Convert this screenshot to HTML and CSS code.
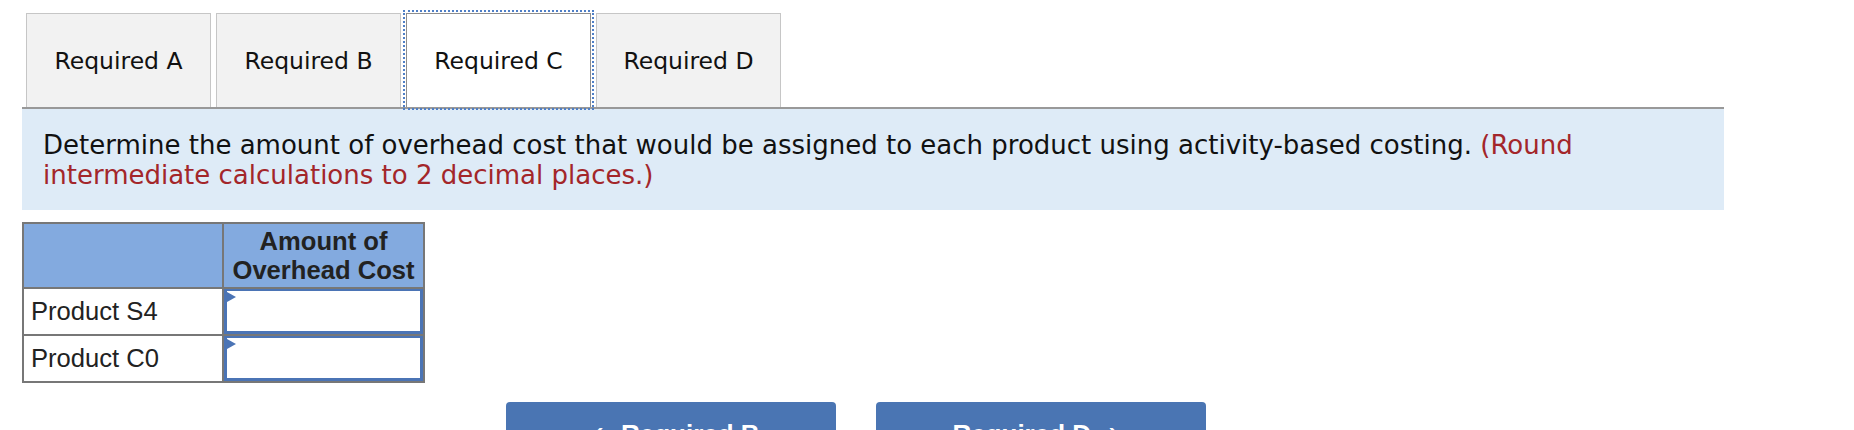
FILE: index.html
```html
<!DOCTYPE html>
<html>
<head>
<meta charset="utf-8">
<link rel="stylesheet" href="styles.css">
</head>
<body>
<div class="page">
  <div class="tabs">
    <div class="tab">Required A</div>
    <div class="tab">Required B</div>
    <div class="tab active">Required C</div>
    <div class="tab">Required D</div>
  </div>
  <div class="instructions">
    Determine the amount of overhead cost that would be assigned to each product using activity-based costing. <span class="note">(Round intermediate calculations to 2 decimal places.)</span>
  </div>
  <table class="grid">
    <tr>
      <th class="blank"></th>
      <th>Amount of<br>Overhead Cost</th>
    </tr>
    <tr>
      <td class="label">Product S4</td>
      <td class="cell"><div class="inputbox"><span class="flag"></span></div></td>
    </tr>
    <tr>
      <td class="label">Product C0</td>
      <td class="cell"><div class="inputbox"><span class="flag"></span></div></td>
    </tr>
  </table>
  <div class="nav">
    <div class="btn"><span class="chev">&lsaquo;</span> Required B</div>
    <div class="btn">Required D <span class="chev">&rsaquo;</span></div>
  </div>
</div>
</body>
</html>
```
FILE: styles.css
```css
html, body {
  margin: 0;
  padding: 0;
  background: #ffffff;
}
body {
  font-family: "DejaVu Sans", Verdana, sans-serif;
  color: #111;
  overflow: hidden;
}
.page {
  padding-left: 22px;
  padding-top: 13px;
}
.tabs {
  display: flex;
  gap: 5px;
  padding-left: 4px;
  position: relative;
  z-index: 1;
}
.tab {
  box-sizing: border-box;
  width: 185px;
  height: 94px;
  border: 1px solid #c6c6c6;
  border-bottom: none;
  background: #f2f2f2;
  display: flex;
  align-items: center;
  justify-content: center;
  font-size: 23.5px;
  color: #111;
}
.tab.active {
  background: #fff;
  border-color: #8e8e8e;
  outline: 2px dotted #4f7fc6;
  outline-offset: 1px;
}
.instructions {
  box-sizing: border-box;
  width: 1702px;
  border-top: 2px solid #999;
  background: #deebf7;
  padding: 21px 21px 20px 21px;
  font-size: 26px;
  line-height: 30px;
  color: #111;
}
.note {
  color: #a3262a;
}
.grid {
  margin-top: 12px;
  border-collapse: collapse;
  font-family: "Liberation Sans", Arial, sans-serif;
  font-size: 25.6px;
  color: #222;
}
.grid th, .grid td {
  border: 2px solid #777;
  padding: 0;
}
.grid th {
  background: #83aadf;
  height: 63px;
  font-weight: bold;
  line-height: 29px;
  text-align: center;
  padding: 0 4px;
}
.grid th.blank {
  width: 198px;
  padding: 0;
}
.grid td {
  height: 45px;
}
.grid td.label {
  padding-left: 7px;
  color: #222;
}
.grid td.cell {
  width: 199px;
}
.inputbox {
  box-sizing: border-box;
  position: relative;
  height: 45px;
  border: 2px solid #4b74b5;
  border-width: 2px 3px 3px 3px;
  background: #fff;
}
.flag {
  position: absolute;
  left: 0;
  top: 1px;
  width: 0;
  height: 0;
  border-top: 5px solid transparent;
  border-bottom: 5px solid transparent;
  border-left: 9px solid #4b74b5;
}
.nav {
  display: flex;
  gap: 40px;
  margin-top: 19px;
  margin-left: 484px;
}
.btn {
  width: 330px;
  height: 60px;
  background: #4a75b3;
  border-radius: 4px;
  color: #fff;
  font-family: "Liberation Sans", Arial, sans-serif;
  font-size: 26px;
  font-weight: bold;
  text-align: center;
  padding-top: 17px;
  box-sizing: border-box;
}
.chev {
  font-weight: normal;
  font-size: 34px;
  line-height: 20px;
  margin: 0 10px;
}
```
